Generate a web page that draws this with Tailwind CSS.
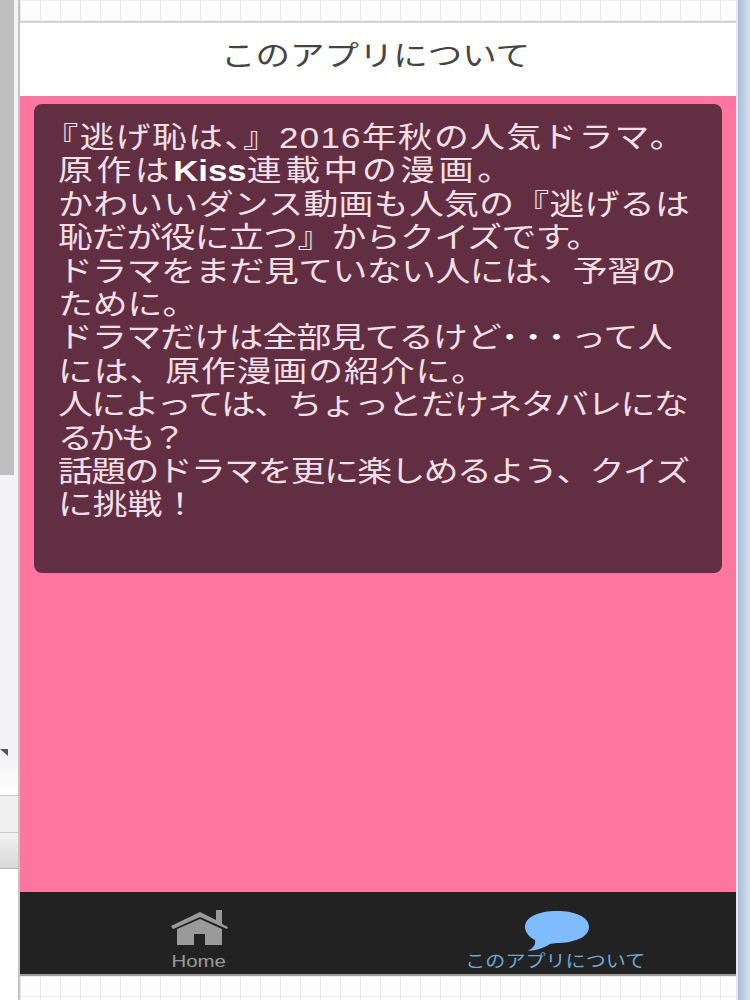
<!DOCTYPE html>
<html lang="ja">
<head>
    <meta charset="UTF-8">
    <meta name="viewport" content="width=device-width, initial-scale=1.0">
    <script src="https://cdn.jsdelivr.net/npm/@tailwindcss/browser@4"></script>
    <title>このアプリについて</title>
</head>
<body class="bg-white overflow-hidden font-['Liberation_Sans','Noto_Sans_CJK_JP',sans-serif]">
    <div class="flex w-[750px] h-[1000px]">
        <!-- left: window behind the emulator -->
        <div class="flex flex-col w-[20px] border-r-2 border-[#c4c4c6] bg-[#f3f3f5]">
            <div class="w-[14px] h-[475px] bg-[#bfbfbf]"></div>
            <div class="h-[274px]"></div>
            <div class="w-0 h-0 border-l-[8px] border-r-0 border-t-[7px] border-l-transparent border-t-[#555]"></div>
            <div class="h-[39px] bg-gradient-to-b from-[#f3f3f5] to-white"></div>
            <div class="h-[37px] bg-[#f0f0f0] border-t border-[#c8c8c8]"></div>
            <div class="h-[36px] bg-gradient-to-b from-[#f2f2f2] to-[#d8d8d8] border-t border-[#c8c8c8]"></div>
            <div class="flex-1 bg-white border-t border-[#b8b8b8]"></div>
        </div>

        <!-- phone screen -->
        <div class="flex flex-col w-[716px]">
            <div class="h-[23px] border-b-2 border-[#d4d4d4] bg-[#fdfdfd] bg-[linear-gradient(to_right,#e8e8e8_1px,transparent_1px),linear-gradient(to_bottom,#efefef_1px,transparent_1px)] bg-[size:20px_20px]"></div>
            <header class="h-[73px] bg-white flex items-center justify-center">
                <h1 class="text-[28px] font-normal text-[#444] scale-x-[1.23] -mt-[5px] -ml-[4px]">このアプリについて</h1>
            </header>
            <main class="flex-1 bg-[#fd76a1] px-[14px] pt-[8px]">
                <div class="h-[469px] rounded-[8px] bg-[#622f42] pl-[24px] pt-[18px] overflow-hidden">
                    <div class="origin-left scale-x-[1.2] w-[530px] whitespace-nowrap text-[29px] leading-[33.4px] text-[#f3dfe6]">
                        <p class="tracking-[1.1px] -ml-[12px]">『逃げ恥は、』2016年秋の人気ドラマ。</p>
                        <p class="tracking-[3px]">原作は<b class="text-white tracking-normal">Kiss</b>連載中の漫画。</p>
                        <p class="tracking-[0.3px]">かわいいダンス動画も人気の『逃げるは</p>
                        <p class="-tracking-[0.5px]">恥だが役に立つ』からクイズです。</p>
                        <p class="-tracking-[0.4px]">ドラマをまだ見ていない人には、予習の</p>
                        <p>ために。</p>
                        <p class="-tracking-[0.6px]">ドラマだけは全部見てるけど<span class="font-bold text-white tracking-[5px]">･･･</span>って人</p>
                        <p class="tracking-[0.8px]">には、原作漫画の紹介に。</p>
                        <p class="-tracking-[1.25px]">人によっては、ちょっとだけネタバレにな</p>
                        <p class="-tracking-[3px]">るかも？</p>
                        <p class="-tracking-[1.3px]">話題のドラマを更に楽しめるよう、クイズ</p>
                        <p>に挑戦！</p>
                    </div>
                </div>
            </main>
            <footer class="h-[84px] bg-[#222222] border-b-2 border-[#999] flex">
                <a class="w-1/2 flex flex-col items-center pt-[18px]">
                    <svg class="w-[57px] h-[35px]" viewBox="0 0 57 35">
                        <path d="M0 16 L29 2 L45 10 V0 H51 V14 L57 17 L56 19 L29 7 L2 19 Z" fill="#9a9a9a"/>
                        <path d="M6 19 L29 9 L51 19 V35 H34 V24 H23 V35 H6 Z" fill="#9a9a9a"/>
                    </svg>
                    <span class="text-[17px] leading-[18px] text-[#9a9a9a] mt-[8px] scale-x-[1.2]">Home</span>
                </a>
                <a class="w-1/2 flex flex-col items-center pt-[18px]">
                    <svg class="w-[66px] h-[42px]" viewBox="0 0 66 42">
                        <path d="M33 1 C51 1 65 7 65 17 C65 27 50 33 33 33 C30 33 28 34 26 34 C22 37 14 40 4 41 C9 38 12 35 11 30 C5 27 1 22 1 17 C1 7 15 1 33 1 Z" fill="#7fbcff"/>
                    </svg>
                    <span class="text-[17px] leading-[18px] text-[#6fa6d6] scale-x-[1.18] mt-[1px] -ml-[3px]">このアプリについて</span>
                </a>
            </footer>
            <div class="h-[24px] bg-[#fdfdfd] bg-[linear-gradient(to_right,#e8e8e8_1px,transparent_1px),linear-gradient(to_bottom,#efefef_1px,transparent_1px)] bg-[size:20px_20px]"></div>
        </div>

        <!-- right: window edge -->
        <div class="flex-1 border-l-2 border-[#e8e8ea] bg-gradient-to-r from-[#a9bedb] to-[#d7e2f0]"></div>
    </div>
</body>
</html>
